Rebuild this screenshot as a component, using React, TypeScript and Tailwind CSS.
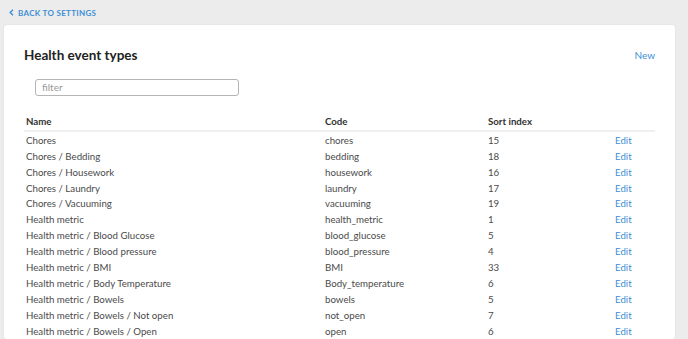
const rows: [string, string, string][] = [
  ["Chores", "chores", "15"],
  ["Chores / Bedding", "bedding", "18"],
  ["Chores / Housework", "housework", "16"],
  ["Chores / Laundry", "laundry", "17"],
  ["Chores / Vacuuming", "vacuuming", "19"],
  ["Health metric", "health_metric", "1"],
  ["Health metric / Blood Glucose", "blood_glucose", "5"],
  ["Health metric / Blood pressure", "blood_pressure", "4"],
  ["Health metric / BMI", "BMI", "33"],
  ["Health metric / Body Temperature", "Body_temperature", "6"],
  ["Health metric / Bowels", "bowels", "5"],
  ["Health metric / Bowels / Not open", "not_open", "7"],
  ["Health metric / Bowels / Open", "open", "6"],
];

export default function App() {
  return (
    <div className="min-h-screen bg-[#ececec] font-['Lato',sans-serif] text-[#333]">
      {/* Back link */}
      <div className="flex h-[25px] items-center gap-[4px] pl-[9px] text-[8px] font-bold tracking-[0.3px] text-[#3d8fd6]">
        <svg width="5" height="7" viewBox="0 0 5 7" fill="none">
          <path d="M4 0.8 L1.2 3.5 L4 6.2" stroke="#3d8fd6" strokeWidth="1.4" />
        </svg>
        <span>BACK TO SETTINGS</span>
      </div>

      {/* Card */}
      <div className="ml-[4px] mr-[13px] rounded-[3px] bg-white pl-[20px] pr-[20px] pt-[20px] shadow-[0_0_2px_rgba(0,0,0,0.08)]">
        <div className="flex items-center justify-between">
          <h1 className="text-[13.5px] font-bold text-[#222]">Health event types</h1>
          <a className="text-[10px] text-[#3d8fd6]">New</a>
        </div>

        <div className="mt-[8px] pl-[11px]">
          <input
            placeholder="filter"
            className="h-[17px] w-[204px] rounded-[3px] border border-[#b5b5b5] px-[6px] text-[10px] placeholder:text-[#999] outline-none"
          />
        </div>

        {/* Table */}
        <div className="mt-[16px] text-[9.7px]">
          <div className="grid h-[19px] grid-cols-[299px_163px_127px_1fr] items-center border-b-[2px] border-[#f0f0f0] font-bold text-[#333]">
            <div className="pl-[2px]">Name</div>
            <div className="pl-[2px]">Code</div>
            <div className="pl-[2px]">Sort index</div>
            <div />
          </div>
          {rows.map(([name, code, sort]) => (
            <div
              key={name}
              className="grid h-[15.9px] grid-cols-[299px_163px_127px_1fr] items-center text-[#4a4a4a]"
            >
              <div className="pl-[2px]">{name}</div>
              <div className="pl-[2px]">{code}</div>
              <div className="pl-[2px]">{sort}</div>
              <div className="pl-[2px] text-[#3d8fd6]">Edit</div>
            </div>
          ))}
        </div>
      </div>
    </div>
  );
}
